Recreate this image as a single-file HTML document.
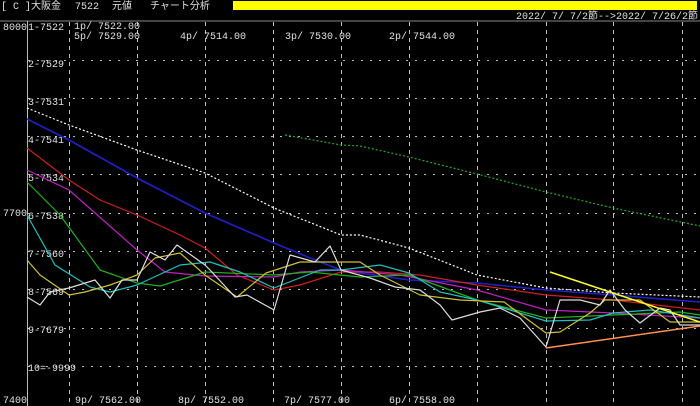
<!DOCTYPE html>
<html><head><meta charset="utf-8"><style>
html,body{margin:0;padding:0;background:#000;width:700px;height:406px;overflow:hidden}
svg{display:block}
text{font-family:"Liberation Mono","Noto Sans CJK JP",monospace;font-size:10px;fill:#e0e0e0}
</style></head><body>
<svg width="700" height="406" viewBox="0 0 700 406">
<rect x="0" y="0" width="700" height="406" fill="#000"/>
<rect x="233" y="1" width="464" height="9" fill="#ffff00"/>
<g style="font-family:'Liberation Sans','Noto Sans CJK JP',sans-serif">
<text x="1" y="9">[ C ]大阪金</text>
<text x="75" y="9">7522</text>
<text x="112" y="9">元値</text>
<text x="150" y="9">チャート分析</text>
</g>
<text x="698" y="19" text-anchor="end" font-size="10">2022/ 7/ 7/2節-->2022/ 7/26/2節</text>
<line x1="0" y1="21" x2="700" y2="21" stroke="#888" stroke-width="1"/>
<line x1="27.5" y1="21" x2="27.5" y2="406" stroke="#bbb" stroke-width="1"/>
<g stroke="#bbb" stroke-width="1" stroke-dasharray="4,4">
<line x1="69.5" y1="22" x2="69.5" y2="406"/><line x1="137.5" y1="22" x2="137.5" y2="406"/>
<line x1="205.5" y1="22" x2="205.5" y2="406"/><line x1="273.5" y1="22" x2="273.5" y2="406"/>
<line x1="341.5" y1="22" x2="341.5" y2="406"/><line x1="409.5" y1="22" x2="409.5" y2="406"/>
<line x1="477.5" y1="22" x2="477.5" y2="406"/><line x1="546.5" y1="22" x2="546.5" y2="406"/>
<line x1="613.5" y1="22" x2="613.5" y2="406"/><line x1="682.5" y1="22" x2="682.5" y2="406"/>
</g>
<g stroke="#bbb" stroke-width="1" stroke-dasharray="2,7">
<line x1="28" y1="60.5" x2="700" y2="60.5"/><line x1="28" y1="98.5" x2="700" y2="98.5"/>
<line x1="28" y1="136.5" x2="700" y2="136.5"/><line x1="28" y1="174.5" x2="700" y2="174.5"/>
<line x1="28" y1="213.5" x2="700" y2="213.5"/><line x1="28" y1="251.5" x2="700" y2="251.5"/>
<line x1="28" y1="289.5" x2="700" y2="289.5"/><line x1="28" y1="328.5" x2="700" y2="328.5"/>
<line x1="28" y1="366.5" x2="700" y2="366.5"/>
</g>
<text x="3" y="30">8000</text><text x="3" y="216">7700</text><text x="3" y="403">7400</text>
<text x="28" y="30">1-7522</text><text x="28" y="67">2-7529</text><text x="28" y="105">3-7531</text>
<text x="28" y="143">4-7541</text><text x="28" y="181">5-7534</text><text x="28" y="219">6-7538</text>
<text x="28" y="257">7-7560</text><text x="28" y="295">8-7569</text><text x="28" y="333">9-7679</text>
<text x="28" y="371">10=-9999</text>
<text x="74" y="29">1p/ 7522.00</text><text x="74" y="39">5p/ 7529.00</text>
<text x="180" y="39">4p/ 7514.00</text><text x="285" y="39">3p/ 7530.00</text><text x="389" y="39">2p/ 7544.00</text>
<text x="75" y="403">9p/ 7562.00</text><text x="178" y="403">8p/ 7552.00</text>
<text x="284" y="403">7p/ 7577.00</text><text x="389" y="403">6p/ 7558.00</text>
<g fill="none" stroke-width="1.2" stroke-linejoin="round">
<polyline stroke="#ffffff" stroke-dasharray="2,2" points="27,108 69,125 137,150 205,173 274,208 341,235 360,235 409,248 477,275 546,288 613,293 700,297"/>
<polyline stroke="#22aa22" stroke-dasharray="2,2" points="285,135 341,145 360,146 409,157 477,174 546,192 613,208 700,226"/>
<polyline stroke="#2020c8" stroke-width="1.6" points="27,119 69,140 137,178 205,213 274,243 320,262 341,270 360,273 409,280 477,283 546,290 613,295 700,302"/>
<polyline stroke="#cc2020" points="27,148 69,180 100,200 137,215 180,235 205,248 237,275 274,290 300,285 341,272 380,272 420,275 477,285 546,295 613,300 700,310"/>
<polyline stroke="#c020c0" points="27,170 69,190 137,250 165,272 205,276 274,277 300,272 341,270 400,275 477,290 546,310 613,313 700,318"/>
<polyline stroke="#20b020" points="27,182 60,215 100,270 137,283 160,286 205,272 274,275 310,272 360,277 409,275 477,300 546,318 613,315 680,312 700,315"/>
<polyline stroke="#20c0c0" points="27,215 55,265 90,287 110,292 137,285 180,265 210,262 240,272 274,288 320,270 341,270 380,265 409,273 440,292 477,300 546,321 590,320 613,313 650,310 700,318"/>
<polyline stroke="#d0c030" points="27,260 40,275 69,295 85,292 110,285 137,275 155,258 180,253 205,275 237,297 266,273 300,262 341,262 360,262 380,275 420,295 460,300 504,302 546,333 560,332 590,313 605,300 640,300 670,322 700,322"/>
<polyline stroke="#dddddd" points="27,297 40,305 50,292 69,288 95,280 110,298 122,280 137,280 150,252 165,260 177,245 205,265 210,270 235,297 247,295 274,310 290,255 315,262 330,246 341,270 370,278 395,287 420,290 440,305 452,320 480,312 500,308 520,318 546,347 560,300 580,300 600,305 610,290 625,310 640,323 660,308 670,310 680,325 700,325"/>
<line x1="550" y1="272" x2="700" y2="322" stroke="#ffff30" stroke-width="1.5"/>
<line x1="546" y1="348" x2="700" y2="326" stroke="#ff9050" stroke-width="1.5"/>
</g>
</svg>
</body></html>
